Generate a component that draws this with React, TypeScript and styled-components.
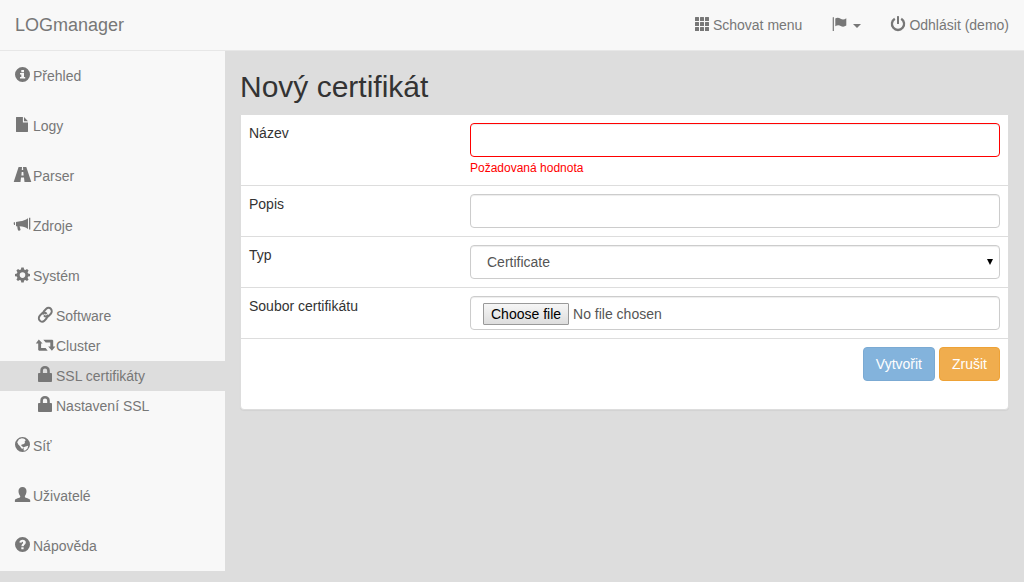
import React, { useState } from 'react';
import styled, { createGlobalStyle, css } from 'styled-components';

const GlobalStyle = createGlobalStyle`
  *, *::before, *::after { box-sizing: border-box; }
  body {
    margin: 0;
    background: #ddd;
    color: #333;
    font-family: "Liberation Sans", Arial, sans-serif;
    font-size: 14px;
    line-height: 20px;
  }
  button, input, select { font: inherit; }
`;

/* ---------- icons ---------- */

const Glyph = styled.svg`
  flex: none;
  width: 16px;
  height: 16px;
  margin: 0 3px 2px -1px;
  overflow: visible;
  fill: currentColor;
  fill-rule: evenodd;
`;

const disc = 'M8.5 0a7.5 7.5 0 1 0 0 15a7.5 7.5 0 1 0 0-15z';

const icons = {
  grid: (
    <>
      {[1, 6, 11].map((y) =>
        [1, 6, 11].map((x) => <rect key={`${x}-${y}`} x={x} y={y} width="4" height="4" rx="0.2" />),
      )}
    </>
  ),
  flag: (
    <path d="M1.7 1.4q.6-.6 1.2 0V15H1.7zM4.3 2.6C6 1.3 8 1.8 9.6 2.8s3.6 1.1 5.700-.5v7.200c-2 1.500-4 1.400-5.600.4S6.200 8.900 4.300 10.300z" />
  ),
  power: (
    <>
      <path d="M4.800 2.700A6.100 6.100 0 1 0 11.200 2.700" fill="none" stroke="currentColor" strokeWidth="2.300" />
      <rect x="7" y="0" width="2" height="8" rx="0.6" />
    </>
  ),
  info: <path d={`${disc}M7.300 3h2.700v2.200H7.300zM6 6h4v4h1.200v1.500H6V10h1.300V7.400H6z`} />,
  file: <path d="M2.300 0H8.900v5.400H14v9.200l-.4.400H2.400L2 14.700V.4zM10 0l4 4.300h-4z" />,
  road: (
    <path d="M4.600 0h7.700L17.300 15H-.3zM8 0l-.2 3h1.400L9 0zM7.700 5l-.3 3.500h2.200L9.300 5zM7 10.500L6.500 15h4l-.5-4.500z" />
  ),
  bullhorn: (
    <path d="M15 .7h1.300v11.800H15zM2 5l4-.7C9 4 11.500 3 14 1.300v10.600C11.600 10.400 9 9.500 5.600 9.300l1 3.700-1.800.9L3.700 12.500 3.200 9.200H2zM-.2 5.200H1V8H.2l-.5-1z" />
  ),
  cog: (
    <path d="M7.300 .6h2.400l.4 1.900 1.300.5 1.600-1 1.600 1.600-1 1.600.5 1.300 1.900.4v2.300l-1.900.4-.5 1.300 1 1.600-1.600 1.600-1.600-1-1.300.5-.4 1.900H7.300l-.4-1.900-1.300-.5-1.600 1-1.600-1.600 1-1.600-.5-1.300-1.900-.4V6.900l1.900-.4.5-1.300-1-1.600L4 2l1.600 1 1.300-.5zM8.500 5.300a2.800 2.800 0 1 0 0 5.600a2.800 2.800 0 1 0 0-5.600z" />
  ),
  link: (
    <g transform="translate(0.500 -0.700) scale(0.650 0.700)" fill="none" stroke="currentColor" strokeWidth="3">
      <path d="M10 13a5 5 0 0 0 7.540.54l3-3a5 5 0 0 0-7.070-7.070l-3.500 3.500a5 5 0 0 0-.6 5" />
      <path d="M14 11a5 5 0 0 0-7.540-.54l-3 3a5 5 0 0 0 7.070 7.070l3.500-3.500a5 5 0 0 0 .6-5" />
    </g>
  ),
  retweet: (
    <path d="M1.800 2.600L5.600 6.600H4.100v4.300h4.500l2.100 2.900H2.100l-.9-.8V6.600H-1.200zM6.300 2.700h9l.9.900v5.900h2.200L14.900 13.800 11.200 9.500h2.100V5.600H8.700z" />
  ),
  lock: (
    <path d="M3.300 6V3.600C3.300 .6 5.300-1 8-1s4.800 1.600 4.800 4.600V6h1.400q.8 0 .8.900v7.200q0 .9-.8.900H1.800Q1 15 1 14.100V6.900Q1 6 1.800 6zM5.900 6h4.300V3.700Q10.200 1.500 8 1.500T5.900 3.700z" />
  ),
  globe: (
    <path
      d={`${disc}M5 2.200L7.800 1.200 9.400 1.600l1.700.6.5 1.600-1 .8.400 1.500-1.700 1.200-1.600.1-.5 1.400 1.900 1.200-.1 1.800-1.500-.4L6 9.200 4.300 7.500 3.200 5.200zM9 10.500l2.600-1 2.600-.8-.7 2.700-2.500 2.400-1.500-.5.3-1.600z`}
    />
  ),
  user: (
    <path d="M8.500 0c2.600 0 4 1.700 4 4 0 2.200-.7 3.800-1.600 4.900V10c.5 1.200 4.700 1.300 5.300 3.200V15H.9v-1.800C1.500 11.300 5.700 11.200 6.200 10V8.900C5.200 7.800 4.500 6.200 4.500 4 4.500 1.700 5.900 0 8.500 0z" />
  ),
  help: (
    <path
      d={`${disc}M7.300 10.300h2.300v2H7.300zM5.400 5.600C5.500 3.800 6.800 2.800 8.600 2.800c2 0 3.200 1 3.200 2.600 0 2-2 2.200-2.100 3.900H7.400c0-2.300 1.700-2.500 1.700-3.600 0-.6-.2-.9-.7-.9s-.8.400-.8 1z`}
    />
  ),
};

type IconName = keyof typeof icons;

const Icon = ({ name }: { name: IconName }) => (
  <Glyph viewBox="0 0 16 16" aria-hidden="true">
    {icons[name]}
  </Glyph>
);

/* ---------- top bar ---------- */

const TopBar = styled.header`
  display: flex;
  justify-content: space-between;
  background: #f8f8f8;
  border-bottom: 1px solid #e7e7e7;
`;

const Brand = styled.a`
  padding: 15px;
  color: #777;
  font-size: 18px;
  text-decoration: none;
`;

const TopNav = styled.nav`
  display: flex;
`;

const topItem = css`
  display: flex;
  align-items: center;
  padding: 15px;
  color: #777;
  white-space: nowrap;
`;

const TopLink = styled.a`
  ${topItem}
  text-decoration: none;
`;

const TopButton = styled.button`
  ${topItem}
  border: 0;
  background: none;
  cursor: pointer;
`;

const Caret = styled.span`
  margin: 2px 0 0 3px;
  border-top: 4px solid;
  border-right: 4px solid transparent;
  border-left: 4px solid transparent;
`;

/* ---------- side menu ---------- */

const Layout = styled.div`
  display: flex;
  align-items: flex-start;
`;

const Sidebar = styled.nav`
  flex: none;
  width: 225px;
  background: #f8f8f8;
`;

const Menu = styled.ul`
  margin: 0;
  padding: 0;
  list-style: none;
`;

const MenuLink = styled.a<{ $sub?: boolean; $active?: boolean }>`
  display: flex;
  align-items: center;
  padding: ${(p) => (p.$sub ? '5px 15px 5px 38px' : '15px')};
  background: ${(p) => (p.$active ? '#ddd' : 'transparent')};
  color: #777;
  text-decoration: none;
`;

interface MenuEntry {
  icon: IconName;
  label: string;
  active?: boolean;
  children?: MenuEntry[];
}

const menu: MenuEntry[] = [
  { icon: 'info', label: 'Přehled' },
  { icon: 'file', label: 'Logy' },
  { icon: 'road', label: 'Parser' },
  { icon: 'bullhorn', label: 'Zdroje' },
  {
    icon: 'cog',
    label: 'Systém',
    children: [
      { icon: 'link', label: 'Software' },
      { icon: 'retweet', label: 'Cluster' },
      { icon: 'lock', label: 'SSL certifikáty', active: true },
      { icon: 'lock', label: 'Nastavení SSL' },
    ],
  },
  { icon: 'globe', label: 'Síť' },
  { icon: 'user', label: 'Uživatelé' },
  { icon: 'help', label: 'Nápověda' },
];

const MenuList = ({ entries, sub }: { entries: MenuEntry[]; sub?: boolean }) => (
  <Menu>
    {entries.map((entry) => (
      <li key={entry.label}>
        <MenuLink href="#" $sub={sub} $active={entry.active} aria-current={entry.active ? 'page' : undefined}>
          <Icon name={entry.icon} />
          {entry.label}
        </MenuLink>
        {entry.children && <MenuList entries={entry.children} sub />}
      </li>
    ))}
  </Menu>
);

/* ---------- form ---------- */

const Main = styled.main`
  flex: 1;
  min-width: 0;
  padding: 0 15px 20px;
`;

const Title = styled.h1`
  margin: 19px 0 11px;
  font-size: 30px;
  font-weight: 400;
  line-height: 33px;
`;

const Panel = styled.form`
  padding-bottom: 20px;
  background: #fff;
  border: 1px solid #ddd;
  border-radius: 0 0 4px 4px;
  box-shadow: 0 1px 1px rgba(0, 0, 0, 0.05);
`;

const Row = styled.div`
  display: grid;
  grid-template-columns: 213px minmax(0, 1fr);
  column-gap: 8px;
  padding: 8px;
  border-bottom: 1px solid #ddd;
`;

const Actions = styled.div`
  display: flex;
  justify-content: flex-end;
  gap: 4px;
  padding: 8px;
`;

const control = css`
  display: block;
  width: 100%;
  height: 34px;
  padding: 6px 12px;
  border: 1px solid #ccc;
  border-radius: 4px;
  background: #fff;
  color: #555;
  box-shadow: inset 0 1px 1px rgba(0, 0, 0, 0.075);
`;

const TextInput = styled.input<{ $invalid?: boolean }>`
  ${control}
  border-color: ${(p) => (p.$invalid ? '#f00' : '#ccc')};
  outline: 0;
`;

const ErrorText = styled.div`
  height: 20px;
  padding-top: 1px;
  color: #f00;
  font-size: 12px;
`;

const SelectWrap = styled.div`
  position: relative;
`;

const Select = styled.select`
  ${control}
  padding: 6px 16px;
  appearance: none;
`;

const SelectArrow = styled.svg`
  position: absolute;
  top: 14px;
  right: 7px;
  width: 6px;
  height: 6px;
  pointer-events: none;
`;

const FileField = styled.label`
  ${control}
  position: relative;
  display: flex;
  align-items: center;
  gap: 4px;
  padding: 7px 12px 5px;
`;

const FileButton = styled.span`
  height: 22px;
  padding: 0 7px;
  border: 1px solid #999;
  border-radius: 1px;
  background: linear-gradient(#f6f6f6, #ddd);
  color: #000;
`;

const FileInput = styled.input`
  position: absolute;
  inset: 0;
  width: 100%;
  opacity: 0;
  cursor: pointer;
`;

const Button = styled.button<{ $kind: 'primary' | 'warning' }>`
  padding: 6px 12px;
  border: 1px solid ${(p) => (p.$kind === 'primary' ? '#357ebd' : '#eea236')};
  border-radius: 4px;
  background: ${(p) => (p.$kind === 'primary' ? '#428bca' : '#f0ad4e')};
  color: #fff;
  line-height: 20px;
  cursor: pointer;

  &:disabled {
    opacity: 0.65;
    cursor: not-allowed;
  }
`;

export default function App() {
  const [name, setName] = useState('');
  const [fileName, setFileName] = useState('');
  const invalid = name.trim() === '';

  return (
    <>
      <GlobalStyle />
      <TopBar>
        <Brand href="#">LOGmanager</Brand>
        <TopNav>
          <TopLink href="#">
            <Icon name="grid" />
            Schovat menu
          </TopLink>
          <TopButton type="button" aria-label="Jazyk">
            <Icon name="flag" />
            <Caret />
          </TopButton>
          <TopLink href="#">
            <Icon name="power" />
            Odhlásit (demo)
          </TopLink>
        </TopNav>
      </TopBar>
      <Layout>
        <Sidebar>
          <MenuList entries={menu} />
        </Sidebar>
        <Main>
          <Title>Nový certifikát</Title>
          <Panel onSubmit={(e) => e.preventDefault()}>
            <Row>
              <label htmlFor="name">Název</label>
              <div>
                <TextInput
                  id="name"
                  value={name}
                  onChange={(e) => setName(e.target.value)}
                  $invalid={invalid}
                  aria-invalid={invalid}
                />
                {invalid && <ErrorText>Požadovaná hodnota</ErrorText>}
              </div>
            </Row>
            <Row>
              <label htmlFor="description">Popis</label>
              <TextInput id="description" />
            </Row>
            <Row>
              <label htmlFor="type">Typ</label>
              <SelectWrap>
                <Select id="type">
                  <option>Certificate</option>
                </Select>
                <SelectArrow viewBox="0 0 6 6" aria-hidden="true">
                  <path d="M0 0h6L3 6z" />
                </SelectArrow>
              </SelectWrap>
            </Row>
            <Row>
              <label htmlFor="file">Soubor certifikátu</label>
              <FileField>
                <FileButton>Choose file</FileButton>
                <span>{fileName || 'No file chosen'}</span>
                <FileInput
                  id="file"
                  type="file"
                  onChange={(e) => setFileName(e.target.files?.[0]?.name ?? '')}
                />
              </FileField>
            </Row>
            <Actions>
              <Button type="submit" $kind="primary" disabled={invalid}>
                Vytvořit
              </Button>
              <Button type="button" $kind="warning">
                Zrušit
              </Button>
            </Actions>
          </Panel>
        </Main>
      </Layout>
    </>
  );
}
